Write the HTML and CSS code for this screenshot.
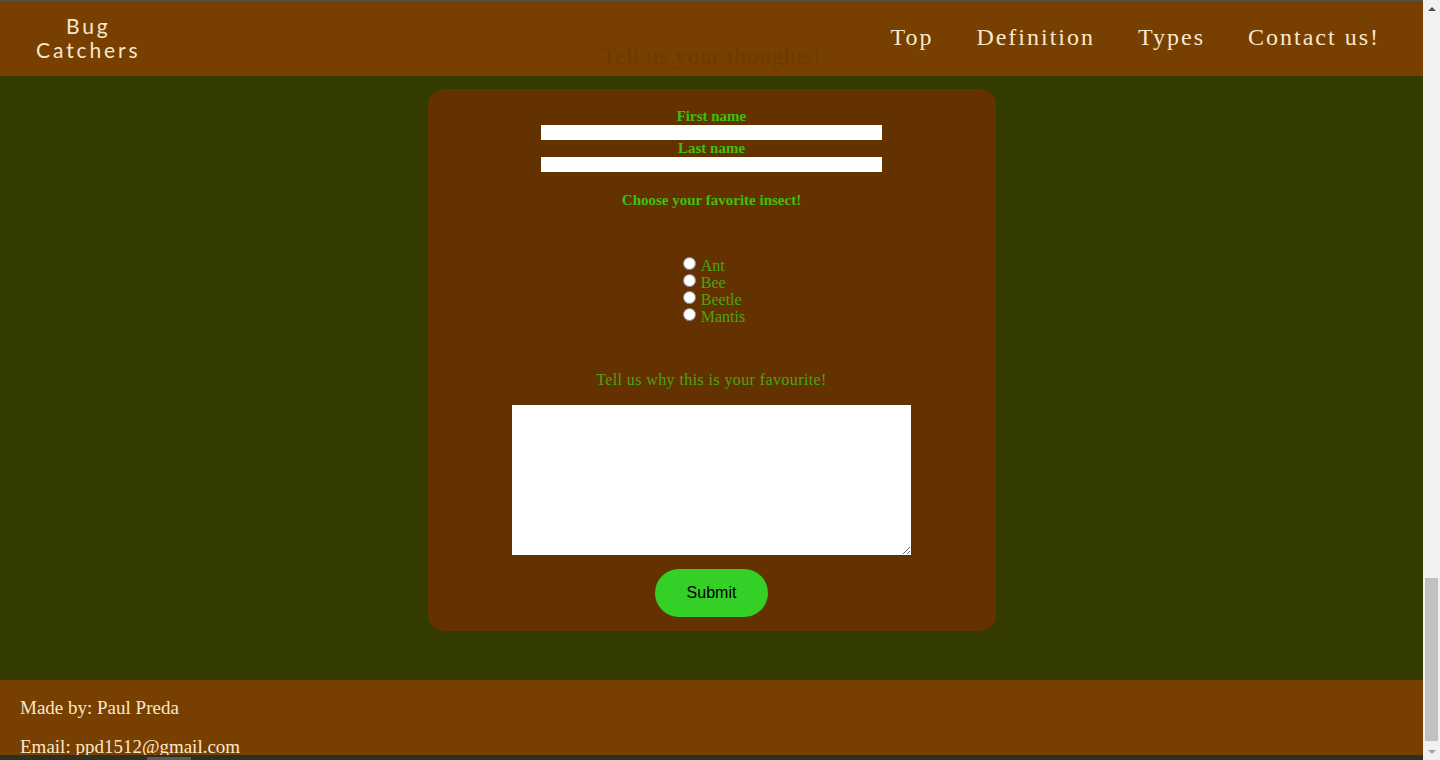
FILE: index.html
```html
<!DOCTYPE html>
<html lang="en">
<head>
<meta charset="utf-8">
<title>Bug Catchers - Contact</title>
<link rel="stylesheet" href="styles.css">
</head>
<body>
<div class="window">
  <div class="page">
    <header class="header">
      <div class="logo"><span class="logo-line">Bug</span><span class="logo-line">Catchers</span></div>
      <nav class="nav">
        <a href="#">Top</a>
        <a href="#">Definition</a>
        <a href="#">Types</a>
        <a href="#">Contact us!</a>
      </nav>
      <h2 class="ghost-title">Tell us your thoughts!</h2>
    </header>
    <main class="content">
      <form class="card">
        <label class="label-bold" for="fn">First name</label>
        <input class="text-in" id="fn" type="text">
        <label class="label-bold" for="ln">Last name</label>
        <input class="text-in" id="ln" type="text">
        <p class="label-bold choose">Choose your favorite insect!</p>
        <div class="radios">
          <label class="radio-row"><input type="radio" name="bug"><span>Ant</span></label>
          <label class="radio-row"><input type="radio" name="bug"><span>Bee</span></label>
          <label class="radio-row"><input type="radio" name="bug"><span>Beetle</span></label>
          <label class="radio-row"><input type="radio" name="bug"><span>Mantis</span></label>
        </div>
        <p class="why">Tell us why this is your favourite!</p>
        <textarea class="area"></textarea>
        <button class="submit" type="button">Submit</button>
      </form>
    </main>
    <footer class="footer">
      <p>Made by: Paul Preda</p>
      <p>Email: ppd1512@gmail.com</p>
    </footer>
    <div class="hbar"><span class="hbar-thumb"></span></div>
  </div>
  <div class="vscroll">
    <div class="arrow up"></div>
    <div class="track"><div class="thumb"></div></div>
    <div class="arrow down"></div>
  </div>
</div>
</body>
</html>
```
FILE: styles.css
```css
* { box-sizing: border-box; }
html, body { margin: 0; padding: 0; }
body {
  width: 1440px;
  height: 760px;
  overflow: hidden;
  background: #333b00;
}
.window {
  display: flex;
  height: 760px;
}
.page {
  flex: 1;
  display: flex;
  flex-direction: column;
  height: 760px;
  overflow: hidden;
  border-top: 1px solid #505050;
  background: #333b00;
}
.header {
  position: relative;
  height: 75px;
  flex: none;
  background: #773f00;
  display: flex;
  align-items: center;
  justify-content: space-between;
  padding: 0 43px 0 36px;
}
.logo {
  display: flex;
  flex-direction: column;
  align-items: center;
  font-family: "Lato", "Open Sans", sans-serif;
  font-size: 21px;
  letter-spacing: 2.9px;
  color: #f7e8cc;
  margin-top: -1px;
}
.logo-line {
  display: block;
  line-height: 24px;
  height: 24px;
}
.nav {
  display: flex;
  gap: 43px;
  margin-top: -2px;
}
.nav a {
  font-family: "Liberation Serif", serif;
  font-size: 24px;
  letter-spacing: 2px;
  color: #f7e8cc;
  text-decoration: none;
}
.ghost-title {
  position: absolute;
  left: 0;
  right: 0;
  top: 41px;
  margin: 0;
  text-align: center;
  font-family: "Liberation Serif", serif;
  font-weight: normal;
  font-size: 24px;
  line-height: 28px;
  color: #6d3a00;
  letter-spacing: 0.4px;
}
.content {
  flex: none;
  height: 604px;
  padding-top: 13px;
  display: flex;
  justify-content: center;
  align-items: flex-start;
}
.card {
  width: 568px;
  height: 542px;
  background: #633200;
  border-radius: 16px;
  padding: 19px 0 14px;
  display: flex;
  flex-direction: column;
  align-items: center;
}
.label-bold {
  font-family: "Liberation Serif", serif;
  font-weight: bold;
  font-size: 15px;
  line-height: 16px;
  color: #3fbf10;
  margin: 0;
}
.text-in {
  width: 341px;
  height: 15px;
  border: none;
  padding: 0;
  margin: 1px 0 0;
  background: #fff;
  display: block;
}
.choose {
  margin-top: 20px;
}
.radios {
  margin-top: 47px;
  display: flex;
  flex-direction: column;
  align-items: flex-start;
  padding-left: 5px;
}
.radio-row {
  display: flex;
  align-items: center;
  height: 17px;
  font-family: "Liberation Serif", serif;
  font-size: 16px;
  color: #4aa514;
}
.radio-row input {
  margin: 0 5px 0 0;
  width: 13px;
  height: 13px;
}
.radio-row span {
  position: relative;
  top: 2px;
}
.why {
  margin: 49px 0 0;
  font-family: "Liberation Serif", serif;
  font-size: 16px;
  line-height: 16px;
  color: #4aa514;
  letter-spacing: 0.4px;
}
.area {
  margin-top: 17px;
  width: 399px;
  height: 150px;
  border: none;
  background: #fff;
  display: block;
}
.submit {
  margin-top: 14px;
  width: 113px;
  height: 48px;
  border: none;
  border-radius: 24px;
  background: #34cf27;
  font-family: "Liberation Sans", Arial, sans-serif;
  font-size: 16px;
  color: #000;
}
.footer {
  flex: 1;
  min-height: 0;
  overflow: hidden;
  background: #773f00;
  padding: 18px 20px 0;
  font-family: "Liberation Serif", serif;
  font-size: 19px;
  line-height: 20px;
  color: #f7e8cc;
}
.footer p {
  margin: 0 0 19px;
}
.hbar {
  flex: none;
  height: 5px;
  background: #2c2f22;
  position: relative;
}
.hbar-thumb {
  position: absolute;
  left: 147px;
  top: 2px;
  width: 44px;
  height: 3px;
  background: #5a5a5a;
}
.vscroll {
  width: 17px;
  flex: none;
  background: #f1f1f1;
  display: flex;
  flex-direction: column;
}
.arrow {
  height: 17px;
  flex: none;
  display: flex;
  align-items: center;
  justify-content: center;
}
.arrow::before {
  content: "";
  width: 0;
  height: 0;
  border-left: 4px solid transparent;
  border-right: 4px solid transparent;
}
.arrow.up::before { border-bottom: 4px solid #505050; }
.arrow.down::before { border-top: 4px solid #a3a3a3; }
.track {
  flex: 1;
  display: flex;
  flex-direction: column;
  justify-content: flex-end;
  align-items: center;
  padding-bottom: 2px;
}
.thumb {
  width: 13px;
  height: 163px;
  background: #c1c1c1;
}
```
